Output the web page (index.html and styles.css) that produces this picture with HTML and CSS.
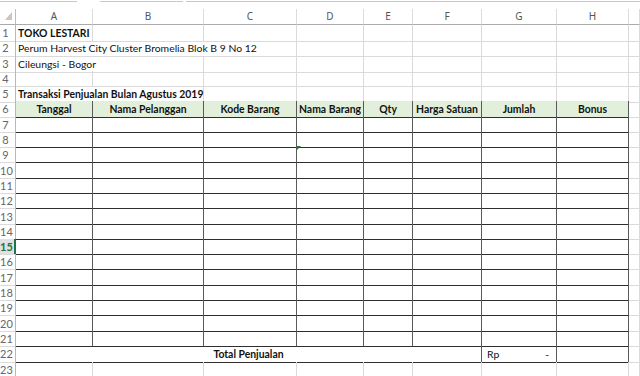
FILE: index.html
```html
<!DOCTYPE html>
<html>
<head>
<meta charset="utf-8">
<link rel="stylesheet" href="styles.css">
</head>
<body>
<div class="topbar"><div class="box b1"></div><div class="gap g1"></div><div class="box b2"></div><div class="gap g2"></div><div class="box b3"></div></div>
<div class="sheet">
<div class="row hdr"><div class="corner"><svg width="7" height="8" viewBox="0 0 7 8"><polygon points="7,0 7,8 0,8" fill="#c6c6c6"/></svg></div><div>A</div><div>B</div><div>C</div><div>D</div><div>E</div><div>F</div><div>G</div><div>H</div><div></div></div>
<div class="row"><div class="rh">1</div><div class="b">TOKO LESTARI</div><div></div><div></div><div></div><div></div><div></div><div></div><div></div><div></div></div>
<div class="row"><div class="rh">2</div><div class="s3">Perum Harvest City Cluster Bromelia Blok B 9 No 12</div><div></div><div></div><div></div><div></div><div></div><div></div></div>
<div class="row"><div class="rh">3</div><div class="s2">Cileungsi - Bogor</div><div></div><div></div><div></div><div></div><div></div><div></div><div></div></div>
<div class="row"><div class="rh">4</div><div></div><div></div><div></div><div></div><div></div><div></div><div></div><div></div><div></div></div>
<div class="row"><div class="rh">5</div><div class="s2 b bt">Transaksi Penjualan Bulan Agustus 2019</div><div class="bt"></div><div class="bt"></div><div class="bt"></div><div class="bt"></div><div class="bt"></div><div class="bt"></div><div></div></div>
<div class="row"><div class="rh">6</div><div class="t th">Tanggal</div><div class="t th">Nama Pelanggan</div><div class="t th">Kode Barang</div><div class="t th">Nama Barang</div><div class="t th">Qty</div><div class="t th">Harga Satuan</div><div class="t th">Jumlah</div><div class="t th">Bonus</div><div></div></div>
<div class="row"><div class="rh">7</div><div class="t"></div><div class="t"></div><div class="t"></div><div class="t"></div><div class="t"></div><div class="t"></div><div class="t"></div><div class="t"></div><div></div></div>
<div class="row"><div class="rh">8</div><div class="t"></div><div class="t"></div><div class="t"></div><div class="t"></div><div class="t"></div><div class="t"></div><div class="t"></div><div class="t"></div><div></div></div>
<div class="row"><div class="rh">9</div><div class="t"></div><div class="t"></div><div class="t"></div><div class="t flag"><span class="tri"></span></div><div class="t"></div><div class="t"></div><div class="t"></div><div class="t"></div><div></div></div>
<div class="row"><div class="rh">10</div><div class="t"></div><div class="t"></div><div class="t"></div><div class="t"></div><div class="t"></div><div class="t"></div><div class="t"></div><div class="t"></div><div></div></div>
<div class="row"><div class="rh">11</div><div class="t"></div><div class="t"></div><div class="t"></div><div class="t"></div><div class="t"></div><div class="t"></div><div class="t"></div><div class="t"></div><div></div></div>
<div class="row"><div class="rh">12</div><div class="t"></div><div class="t"></div><div class="t"></div><div class="t"></div><div class="t"></div><div class="t"></div><div class="t"></div><div class="t"></div><div></div></div>
<div class="row"><div class="rh">13</div><div class="t"></div><div class="t"></div><div class="t"></div><div class="t"></div><div class="t"></div><div class="t"></div><div class="t"></div><div class="t"></div><div></div></div>
<div class="row"><div class="rh">14</div><div class="t"></div><div class="t"></div><div class="t"></div><div class="t"></div><div class="t"></div><div class="t"></div><div class="t"></div><div class="t"></div><div></div></div>
<div class="row"><div class="rh sel">15</div><div class="t"></div><div class="t"></div><div class="t"></div><div class="t"></div><div class="t"></div><div class="t"></div><div class="t"></div><div class="t"></div><div></div></div>
<div class="row"><div class="rh">16</div><div class="t"></div><div class="t"></div><div class="t"></div><div class="t"></div><div class="t"></div><div class="t"></div><div class="t"></div><div class="t"></div><div></div></div>
<div class="row"><div class="rh">17</div><div class="t"></div><div class="t"></div><div class="t"></div><div class="t"></div><div class="t"></div><div class="t"></div><div class="t"></div><div class="t"></div><div></div></div>
<div class="row"><div class="rh">18</div><div class="t"></div><div class="t"></div><div class="t"></div><div class="t"></div><div class="t"></div><div class="t"></div><div class="t"></div><div class="t"></div><div></div></div>
<div class="row"><div class="rh">19</div><div class="t"></div><div class="t"></div><div class="t"></div><div class="t"></div><div class="t"></div><div class="t"></div><div class="t"></div><div class="t"></div><div></div></div>
<div class="row"><div class="rh">20</div><div class="t"></div><div class="t"></div><div class="t"></div><div class="t"></div><div class="t"></div><div class="t"></div><div class="t"></div><div class="t"></div><div></div></div>
<div class="row"><div class="rh">21</div><div class="t"></div><div class="t"></div><div class="t"></div><div class="t"></div><div class="t"></div><div class="t"></div><div class="t"></div><div class="t"></div><div></div></div>
<div class="row"><div class="rh">22</div><div class="t s6 b center">Total Penjualan</div><div class="t acct"><span>Rp</span><span>-</span></div><div class="t"></div><div></div></div>
<div class="row"><div class="rh">23</div><div></div><div></div><div></div><div></div><div></div><div></div><div></div><div></div><div></div></div>
</div>
</body>
</html>
```

FILE: styles.css
```css
* { box-sizing: border-box; }
html, body { margin: 0; padding: 0; background: #fff; }
body {
  width: 640px;
  height: 376px;
  overflow: hidden;
  font-family: Lato, "Liberation Sans", sans-serif;
}
.topbar { height: 9px; display: flex; }
.topbar .box { height: 2px; border-bottom: 1px solid #c8c8c8; }
.b1 { width: 77px; }
.g1 { width: 23px; }
.b2 { width: 83px; }
.g2 { width: 3px; }
.b3 { flex: 1; }

.row {
  display: grid;
  grid-template-columns: 16px 77px 111px 93px 67px 49px 69px 75px 72px 1fr;
  height: 15.3px;
}
.row > div {
  border-right: 1px solid #dadada;
  border-bottom: 1px solid #dadada;
  font-size: 10.4px;
  line-height: 16px;
  white-space: nowrap;
  padding: 0 2px;
  color: #111;
  overflow: visible;
}
.hdr { height: 16px; }
.hdr > div {
  color: #555;
  text-align: center;
  font-family: "Noto Sans", sans-serif;
  font-size: 10px;
  line-height: 15px;
  border-bottom-color: #ababab;
  border-right-color: #dcdcdc;
}
.hdr > .corner {
  display: flex;
  justify-content: flex-end;
  align-items: flex-end;
  padding: 0 3px 4px 0;
  border-right-color: #bdbdbd;
}
.corner svg { display: block; }
.row > .rh {
  color: #666;
  text-align: center;
  padding: 0 4px 0 0;
  font-size: 11px;
  line-height: 15px;
  border-right-color: #b8b8b8;
}
.row > .rh.sel {
  background: #e1e1e1;
  color: #217346;
  font-weight: bold;
  border-right-color: #217346;
  box-shadow: inset -1px 0 0 #217346;
}
.s2 { grid-column: span 2; }
.s3 { grid-column: span 3; }
.s6 { grid-column: span 6; }
.b { font-weight: bold; }
.center { text-align: center; }
.row > .bt { border-bottom-color: #2e2e2e; }
.row > .t {
  border-right-color: #5a5a5a;
  border-bottom-color: #2e2e2e;
}
.row > .th {
  background: #e2efda;
  font-weight: bold;
  text-align: center;
}
.flag { position: relative; }
.tri {
  position: absolute;
  left: 0;
  top: -1px;
  width: 0;
  height: 0;
  border-top: 4px solid #1e7a3c;
  border-right: 4px solid transparent;
}
.row > .acct {
  display: flex;
  justify-content: space-between;
  padding: 0 7px 0 5px;
}
```
